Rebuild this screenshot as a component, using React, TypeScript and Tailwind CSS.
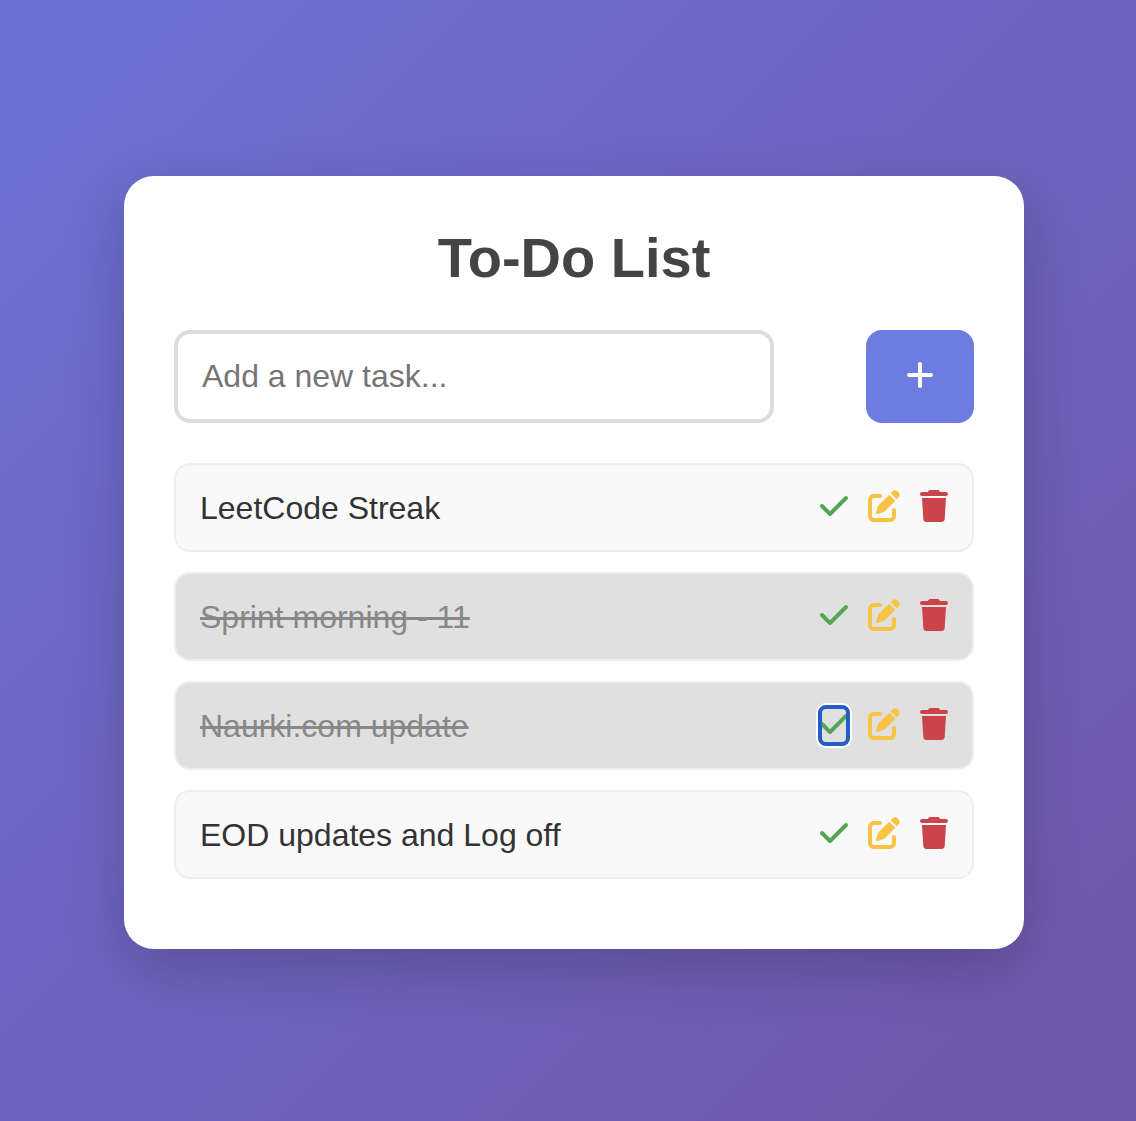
import { FaCheck, FaPlus, FaTrash, FaPenToSquare } from "react-icons/fa6";

type Task = { text: string; done: boolean; focused?: boolean };

const tasks: Task[] = [
  { text: "LeetCode Streak", done: false },
  { text: "Sprint morning - 11", done: true },
  { text: "Naurki.com update", done: true, focused: true },
  { text: "EOD updates and Log off", done: false },
];

function TaskRow({ text, done, focused }: Task) {
  return (
    <li
      className={
        "flex h-[89px] items-center justify-between rounded-2xl border-2 border-[#eeeeee] px-6 " +
        (done ? "bg-[#e0e0e0]" : "bg-[#f9f9f9]")
      }
    >
      <span className={"text-[32px] leading-10 " + (done ? "text-[#888888] line-through" : "text-[#333333]")}>
        {text}
      </span>
      <div className="flex items-start">
        <button
          aria-label="Complete"
          className={
            "flex h-[41px] w-8 justify-center rounded-lg pt-[3px] text-[#53a653] " +
            (focused ? "shadow-[0_0_0_2px_white] outline-4 -outline-offset-4 outline-[#265cc5]" : "")
          }
        >
          <FaCheck className="h-8 w-7 shrink-0" />
        </button>
        <button aria-label="Edit" className="mt-[3px] ml-[18px] text-[#f6c344]">
          <FaPenToSquare className="size-8" />
        </button>
        <button aria-label="Delete" className="mt-[3px] ml-5 text-[#cb444a]">
          <FaTrash className="h-8 w-7" />
        </button>
      </div>
    </li>
  );
}

export default function App() {
  return (
    <main className="flex h-[1121px] w-[1136px] justify-center bg-[linear-gradient(135deg,#6c72d6_0%,#6e64bf_50%,#7057ab_100%)] pt-44 pl-3 font-['Liberation_Sans',Arial,sans-serif]">
      <section className="h-[773px] w-[900px] rounded-[30px] bg-white px-[50px] pt-[50px] shadow-[0_20px_60px_rgba(0,0,0,0.2)]">
        <h1 className="text-center text-[56px] leading-16 font-bold text-[#444444]">To-Do List</h1>
        <div className="mt-10 flex justify-between">
          <input
            placeholder="Add a new task..."
            className="h-[93px] w-[600px] rounded-2xl border-4 border-[#dddddd] px-6 text-[32px] placeholder:text-[#757575]"
          />
          <button aria-label="Add task" className="flex h-[93px] w-[108px] items-center justify-center rounded-2xl bg-[#6c7ce1] text-white">
            <FaPlus className="mb-1 h-8 w-7" />
          </button>
        </div>
        <ul className="mt-10 flex flex-col gap-5">
          {tasks.map((t) => (
            <TaskRow key={t.text} {...t} />
          ))}
        </ul>
      </section>
    </main>
  );
}
